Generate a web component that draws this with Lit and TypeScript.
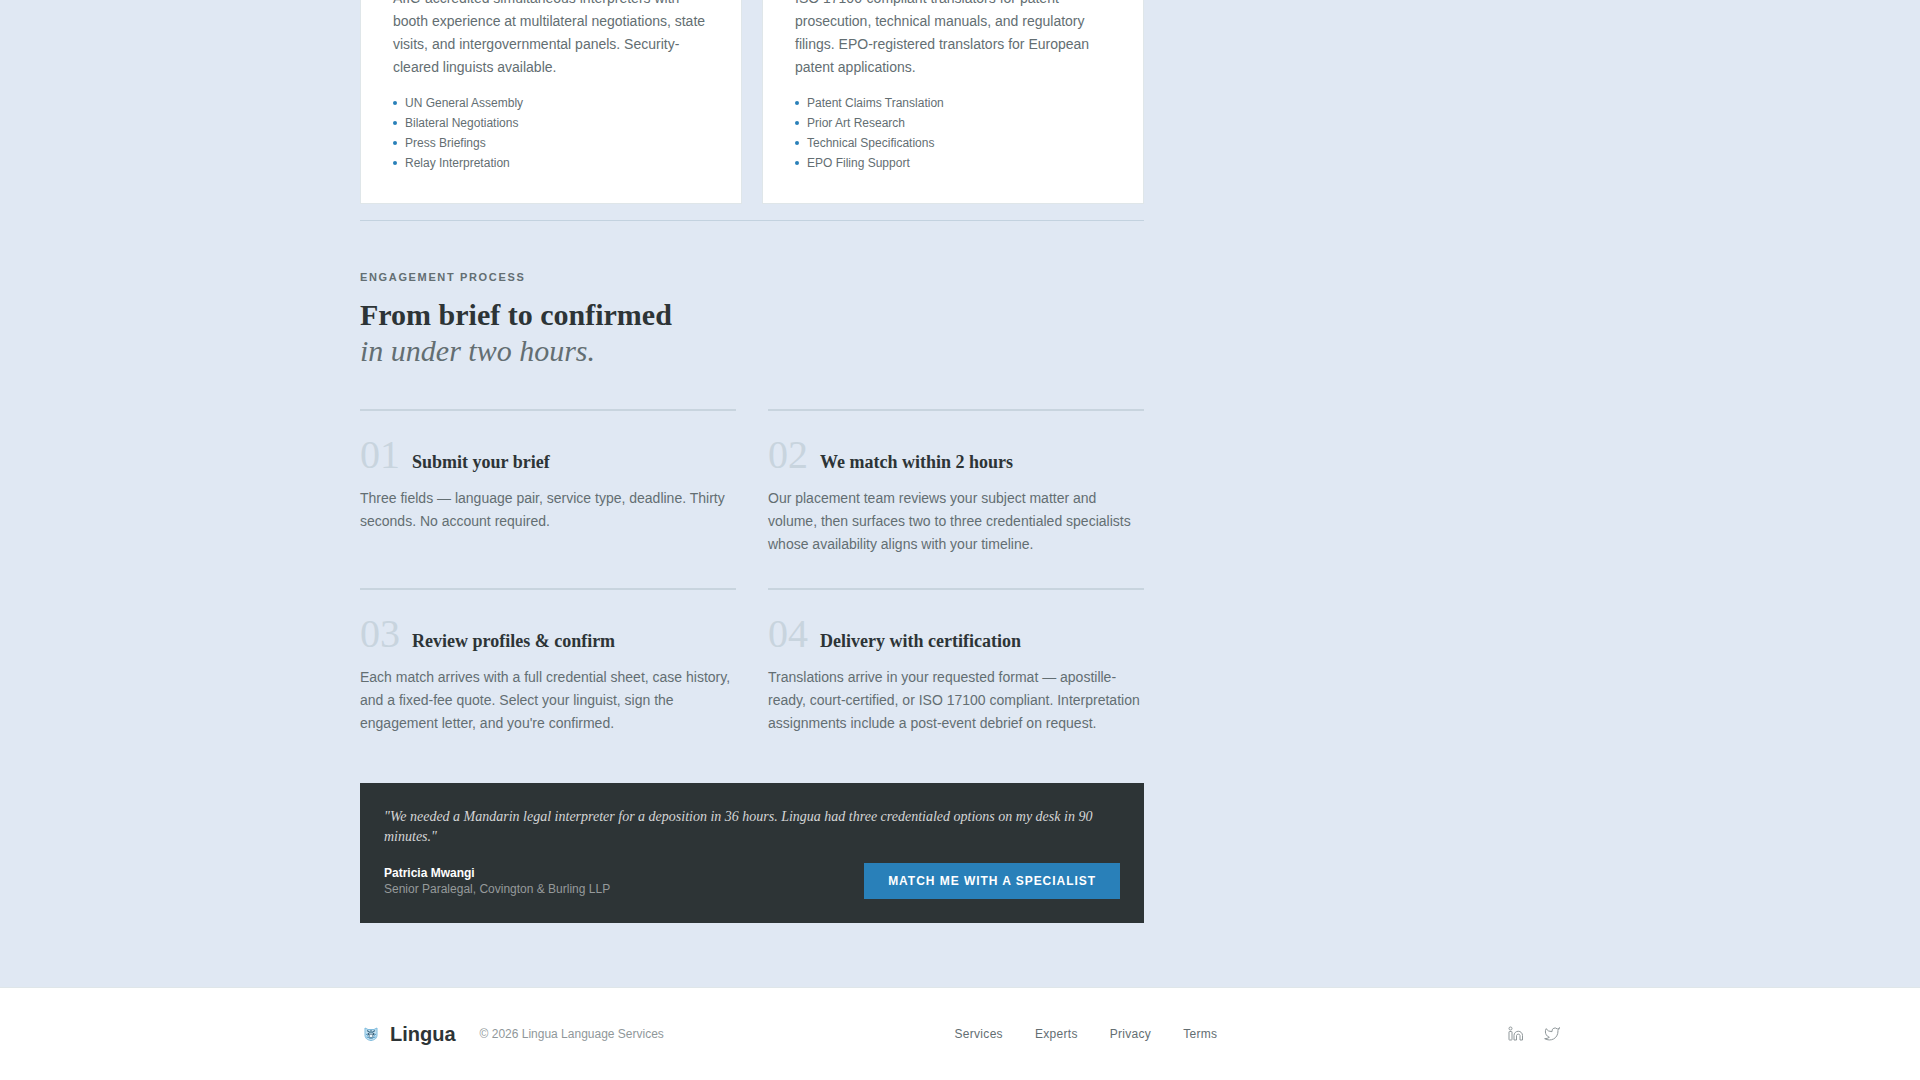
import { LitElement, html, css, svg } from "lit";
import { customElement, property } from "lit/decorators.js";

interface Service {
  text: string;
  items: string[];
}

interface Step {
  num: string;
  title: string;
  text: string;
}

const SERVICES: Service[] = [
  {
    text: "AIIC-accredited simultaneous interpreters with booth experience at multilateral negotiations, state visits, and intergovernmental panels. Security-cleared linguists available.",
    items: ["UN General Assembly", "Bilateral Negotiations", "Press Briefings", "Relay Interpretation"],
  },
  {
    text: "ISO 17100-compliant translators for patent prosecution, technical manuals, and regulatory filings. EPO-registered translators for European patent applications.",
    items: ["Patent Claims Translation", "Prior Art Research", "Technical Specifications", "EPO Filing Support"],
  },
];

const STEPS: Step[] = [
  {
    num: "01",
    title: "Submit your brief",
    text: "Three fields — language pair, service type, deadline. Thirty seconds. No account required.",
  },
  {
    num: "02",
    title: "We match within 2 hours",
    text: "Our placement team reviews your subject matter and volume, then surfaces two to three credentialed specialists whose availability aligns with your timeline.",
  },
  {
    num: "03",
    title: "Review profiles & confirm",
    text: "Each match arrives with a full credential sheet, case history, and a fixed-fee quote. Select your linguist, sign the engagement letter, and you're confirmed.",
  },
  {
    num: "04",
    title: "Delivery with certification",
    text: "Translations arrive in your requested format — apostille-ready, court-certified, or ISO 17100 compliant. Interpretation assignments include a post-event debrief on request.",
  },
];

@customElement("service-card")
export class ServiceCard extends LitElement {
  @property({ attribute: false }) service!: Service;

  static styles = css`
    :host {
      display: block;
      background: #fff;
      border: 1px solid #dfe6e9;
      padding: 32px;
    }
    .text {
      margin: 0 0 16px;
      font-size: 14px;
      line-height: 23px;
      color: #636e72;
    }
    .list {
      display: flex;
      flex-direction: column;
      gap: 4px;
      margin: 0;
      padding: 0;
      list-style: none;
    }
    .item {
      display: flex;
      align-items: center;
      gap: 8px;
      font-size: 12px;
      line-height: 16px;
      color: #636e72;
    }
    .item::before {
      content: "";
      width: 4px;
      height: 4px;
      border-radius: 50%;
      background: #2980b9;
    }
  `;

  render() {
    return html`
      <p class="text">${this.service.text}</p>
      <ul class="list">
        ${this.service.items.map((i) => html`<li class="item">${i}</li>`)}
      </ul>
    `;
  }
}

@customElement("process-step")
export class ProcessStep extends LitElement {
  @property({ attribute: false }) step!: Step;

  static styles = css`
    :host {
      display: block;
      border-top: 2px solid #c8d4de;
      padding-top: 24px;
    }
    .head {
      display: flex;
      align-items: baseline;
      gap: 12px;
      margin-bottom: 12px;
      font-family: "Liberation Serif", serif;
    }
    .num {
      font-size: 40px;
      line-height: 40px;
      color: #c8d4de;
    }
    .title {
      margin: 0;
      font-size: 18px;
      line-height: 24px;
      font-weight: 700;
      color: #2d3436;
    }
    .text {
      margin: 0;
      font-size: 14px;
      line-height: 23px;
      color: #636e72;
    }
  `;

  render() {
    return html`
      <div class="head">
        <span class="num">${this.step.num}</span>
        <h3 class="title">${this.step.title}</h3>
      </div>
      <p class="text">${this.step.text}</p>
    `;
  }
}

const logo = svg`
  <path d="M5 5 L8 6.500 H14 L17 5 V12 C17 15.500 14.500 17 11 17.500 C7.500 17 5 15.500 5 12 Z" fill="#c4e2f2" stroke="#7fbbdd" stroke-width="1"/>
  <path d="M7 7.500 L10 9.500 M15 7.500 L12 9.500 M11 7 V10" stroke="#3f6f8c" stroke-width="1.200" fill="none"/>
  <path d="M6 11 L8 12.500 M16 11 L14 12.500 M6.500 14 L9 14.500 M15.500 14 L13 14.500" stroke="#4d9ac8" stroke-width="1" fill="none"/>
  <circle cx="8.500" cy="11" r="1" fill="#34566e"/>
  <circle cx="13.500" cy="11" r="1" fill="#34566e"/>
  <circle cx="11" cy="13" r="2" fill="#eef7fc" stroke="#5b7f95" stroke-width="1"/>
  <path d="M9.500 16 L11 14.500 L12.500 16" stroke="#3d83b0" stroke-width="1" fill="none"/>`;

@customElement("app-root")
export class AppRoot extends LitElement {
  static styles = css`
    :host {
      display: flex;
      flex-direction: column;
      justify-content: flex-end;
      height: 100vh;
      overflow: hidden;
      background: #e0e8f3;
      font-family: "Liberation Sans", Arial, sans-serif;
      color: #2d3436;
    }
    .wrap {
      box-sizing: border-box;
      width: 100%;
      max-width: 1200px;
      margin: 0 auto;
    }
    .main {
      display: grid;
      grid-template-columns: minmax(0, 1fr) 352px;
      gap: 64px;
      padding-bottom: 64px;
    }
    .cards {
      display: grid;
      grid-template-columns: 1fr 1fr;
      gap: 20px;
      padding-bottom: 16px;
      border-bottom: 1px solid #c3d2df;
    }
    .process {
      padding: 48px 0;
    }
    .label {
      margin: 0 0 12px;
      font-size: 11px;
      line-height: 16px;
      font-weight: 700;
      letter-spacing: 0.15em;
      text-transform: uppercase;
      color: #636e72;
    }
    .heading {
      margin: 0 0 40px;
      font-family: "Liberation Serif", serif;
      font-size: 30px;
      line-height: 36px;
      font-weight: 700;
    }
    .heading em {
      display: block;
      font-weight: 400;
      color: #636e72;
    }
    .steps {
      display: grid;
      grid-template-columns: 1fr 1fr;
      gap: 32px;
    }
    .quote {
      padding: 24px;
      background: #2d3436;
    }
    .words {
      margin: 0 0 16px;
      font-family: "Liberation Serif", serif;
      font-style: italic;
      font-size: 14px;
      line-height: 20px;
      color: #d5d6d7;
    }
    .by {
      display: flex;
      align-items: center;
      justify-content: space-between;
      gap: 16px;
    }
    .person {
      font-size: 12px;
      line-height: 16px;
      color: #969a9b;
    }
    .name {
      display: block;
      font-weight: 700;
      color: #fff;
    }
    .cta {
      border: 0;
      padding: 10px 24px;
      background: #2980b9;
      color: #fff;
      font-family: inherit;
      font-size: 12px;
      line-height: 16px;
      font-weight: 700;
      letter-spacing: 0.08em;
      text-transform: uppercase;
      cursor: pointer;
    }
    .footer {
      border-top: 1px solid #dfe6e9;
      background: #fff;
      font-size: 12px;
      line-height: 16px;
    }
    .bar {
      display: flex;
      align-items: center;
      justify-content: space-between;
      padding: 32px 0;
    }
    .group {
      display: flex;
      align-items: center;
      gap: 24px;
      color: #8f979a;
    }
    .brand {
      display: flex;
      align-items: center;
      gap: 8px;
      font-size: 20px;
      line-height: 28px;
      font-weight: 700;
      color: #2d3436;
    }
    .links {
      display: flex;
      gap: 32px;
      letter-spacing: 0.025em;
    }
    .link {
      color: #636e72;
      text-decoration: none;
    }
    .social {
      display: flex;
      gap: 20px;
    }
    .social a {
      display: flex;
      color: #8f979a;
    }
  `;

  render() {
    return html`
      <main class="wrap main">
        <div>
          <section class="cards">
            ${SERVICES.map((s) => html`<service-card .service=${s}></service-card>`)}
          </section>
          <section class="process">
            <p class="label">Engagement Process</p>
            <h2 class="heading">From brief to confirmed <em>in under two hours.</em></h2>
            <div class="steps">
              ${STEPS.map((s) => html`<process-step .step=${s}></process-step>`)}
            </div>
          </section>
          <section class="quote">
            <p class="words">
              "We needed a Mandarin legal interpreter for a deposition in 36 hours. Lingua had three
              credentialed options on my desk in 90 minutes."
            </p>
            <div class="by">
              <div class="person">
                <span class="name">Patricia Mwangi</span>
                Senior Paralegal, Covington &amp; Burling LLP
              </div>
              <button class="cta" type="button">Match me with a specialist</button>
            </div>
          </section>
        </div>
      </main>
      <footer class="footer">
        <div class="wrap bar">
          <div class="group">
            <div class="brand">
              <svg width="22" height="22" viewBox="0 0 22 22" aria-hidden="true">${logo}</svg>
              <span>Lingua</span>
            </div>
            <span>© 2026 Lingua Language Services</span>
          </div>
          <nav class="links">
            ${["Services", "Experts", "Privacy", "Terms"].map(
              (l) => html`<a class="link" href="#">${l}</a>`
            )}
          </nav>
          <div class="social">
            <a href="#" aria-label="LinkedIn">
              <svg width="16" height="16" viewBox="0 0 16 16" fill="none" stroke="currentColor" stroke-width="1" stroke-linejoin="round">
                <circle cx="2.500" cy="2.500" r="1.500" />
                <rect x="1" y="5.500" width="3" height="8.500" rx="0.500" />
                <path d="M6 14 V9.500 A4.200 4.200 0 0 1 14.500 9.500 V14 H12 V9.500 A1.800 1.800 0 0 0 8.500 9.500 V14 Z" />
              </svg>
            </a>
            <a href="#" aria-label="Twitter">
              <svg width="16" height="16" viewBox="0 0 24 24" fill="none" stroke="currentColor" stroke-width="1.500" stroke-linejoin="round" stroke-linecap="round">
                <path d="M23 3a10.900 10.900 0 0 1-3.140 1.530 4.480 4.480 0 0 0-7.860 3v1A10.660 10.660 0 0 1 3 4s-4 9 5 13a11.640 11.640 0 0 1-7 2c9 5 20 0 20-11.500a4.500 4.500 0 0 0-.080-.830A7.720 7.720 0 0 0 23 3z" />
              </svg>
            </a>
          </div>
        </div>
      </footer>
    `;
  }
}
